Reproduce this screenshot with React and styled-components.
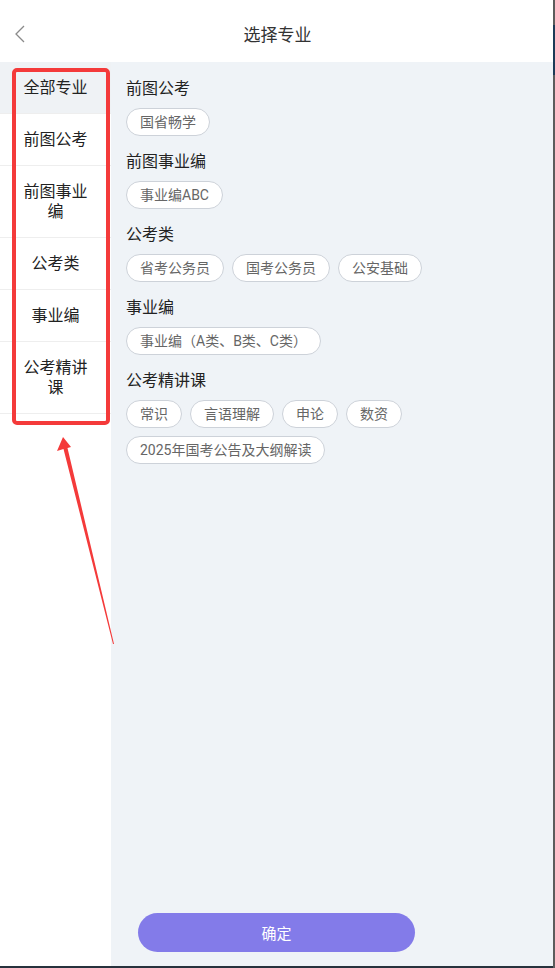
import React from "react";
import styled, { createGlobalStyle } from "styled-components";

const categories = [
  { name: "全部专业", active: true },
  { name: "前图公考" },
  { name: "前图事业编" },
  { name: "公考类" },
  { name: "事业编" },
  { name: "公考精讲课" },
];

const sections = [
  { title: "前图公考", tags: ["国省畅学"] },
  { title: "前图事业编", tags: ["事业编ABC"] },
  { title: "公考类", tags: ["省考公务员", "国考公务员", "公安基础"] },
  { title: "事业编", tags: ["事业编（A类、B类、C类）"] },
  {
    title: "公考精讲课",
    tags: ["常识", "言语理解", "申论", "数资", "2025年国考公告及大纲解读"],
  },
];

const GlobalStyle = createGlobalStyle`
  html, body {
    margin: 0;
    padding: 0;
    background: #fff;
  }
  body {
    font-family: Roboto, "Noto Sans CJK SC", sans-serif;
  }
`;

const App = () => {
  return (
    <Frame>
      <GlobalStyle />
      <Main>
        <Header>
          <BackIcon width="12" height="18" viewBox="0 0 12 18">
            <path d="M10 1 L2 9 L10 17" fill="none" stroke="#8a8a8a" strokeWidth="1.3" />
          </BackIcon>
          <Title>选择专业</Title>
        </Header>
        <Body>
          <Sidebar>
            {categories.map((c) => (
              <NavItem key={c.name} $active={c.active}>
                {c.name}
              </NavItem>
            ))}
          </Sidebar>
          <Content>
            {sections.map((s) => (
              <Section key={s.title}>
                <SectionTitle>{s.title}</SectionTitle>
                <Tags>
                  {s.tags.map((t) => (
                    <Tag key={t}>{t}</Tag>
                  ))}
                </Tags>
              </Section>
            ))}
          </Content>
        </Body>
        <BottomLine />
      </Main>
      <Scrollbar>
        <Thumb />
      </Scrollbar>

      {/* annotation drawn on top of the screenshot */}
      <HighlightBox />
      <Arrow width="555" height="968" viewBox="0 0 555 968">
        <polygon
          points="63,437 71,447 67.5,448 114,644 113,644 63.5,449 57,451"
          fill="#f43a3a"
        />
      </Arrow>

      <ConfirmButton>确定</ConfirmButton>
    </Frame>
  );
};

const Frame = styled.div`
  position: relative;
  width: 555px;
  height: 968px;
  display: flex;
  overflow: hidden;
`;

const Main = styled.div`
  flex: 1;
  display: flex;
  flex-direction: column;
`;

const Header = styled.div`
  height: 62px;
  flex-shrink: 0;
  background: #fff;
  display: flex;
  align-items: center;
  justify-content: center;
  position: relative;
`;

const BackIcon = styled.svg`
  position: absolute;
  left: 14px;
  top: 25px;
`;

const Title = styled.div`
  font-size: 17px;
  color: #333;
  margin-left: 2px;
  margin-bottom: -4px;
`;

const Body = styled.div`
  flex: 1;
  display: flex;
  min-height: 0;
`;

const Sidebar = styled.div`
  width: 111px;
  flex-shrink: 0;
  background: #fff;
`;

const NavItem = styled.div`
  padding: 16px 18px 15px;
  font-size: 16px;
  line-height: 20px;
  color: #222;
  text-align: center;
  background: ${(p) => (p.$active ? "#eff2f5" : "#fff")};
  border-bottom: 1px solid #eeeeee;
`;

const Content = styled.div`
  flex: 1;
  background: #eff3f7;
  padding: 16px 15px;
  box-sizing: border-box;
`;

const Section = styled.div`
  margin-bottom: 15px;
`;

const SectionTitle = styled.div`
  font-size: 16px;
  line-height: 22px;
  color: #222;
  margin-bottom: 8px;
`;

const Tags = styled.div`
  display: flex;
  flex-wrap: wrap;
  gap: 8px;
`;

const Tag = styled.div`
  height: 28px;
  box-sizing: border-box;
  padding: 0 13px;
  border: 1px solid #cdd2d9;
  border-radius: 14px;
  background: #fff;
  font-size: 14px;
  line-height: 26px;
  color: #666;
  white-space: nowrap;
`;

const BottomLine = styled.div`
  height: 2px;
  flex-shrink: 0;
  background: #27323d;
`;

const Scrollbar = styled.div`
  width: 2px;
  flex-shrink: 0;
  background: #5c5c5c;
  padding-top: 25px;
`;

const Thumb = styled.div`
  height: 50px;
  background: #1d3b57;
`;

const HighlightBox = styled.div`
  position: absolute;
  left: 12px;
  top: 68px;
  width: 98px;
  height: 357px;
  box-sizing: border-box;
  border: 4px solid #f43a3a;
  border-radius: 5px;
  pointer-events: none;
`;

const Arrow = styled.svg`
  position: absolute;
  left: 0;
  top: 0;
  pointer-events: none;
`;

const ConfirmButton = styled.button`
  position: absolute;
  left: 138px;
  top: 913px;
  width: 277px;
  height: 39px;
  border: none;
  border-radius: 20px;
  background: #837be9;
  color: #fff;
  font-family: Roboto, "Noto Sans CJK SC", sans-serif;
  font-size: 15px;
  cursor: pointer;
`;

export default App;
